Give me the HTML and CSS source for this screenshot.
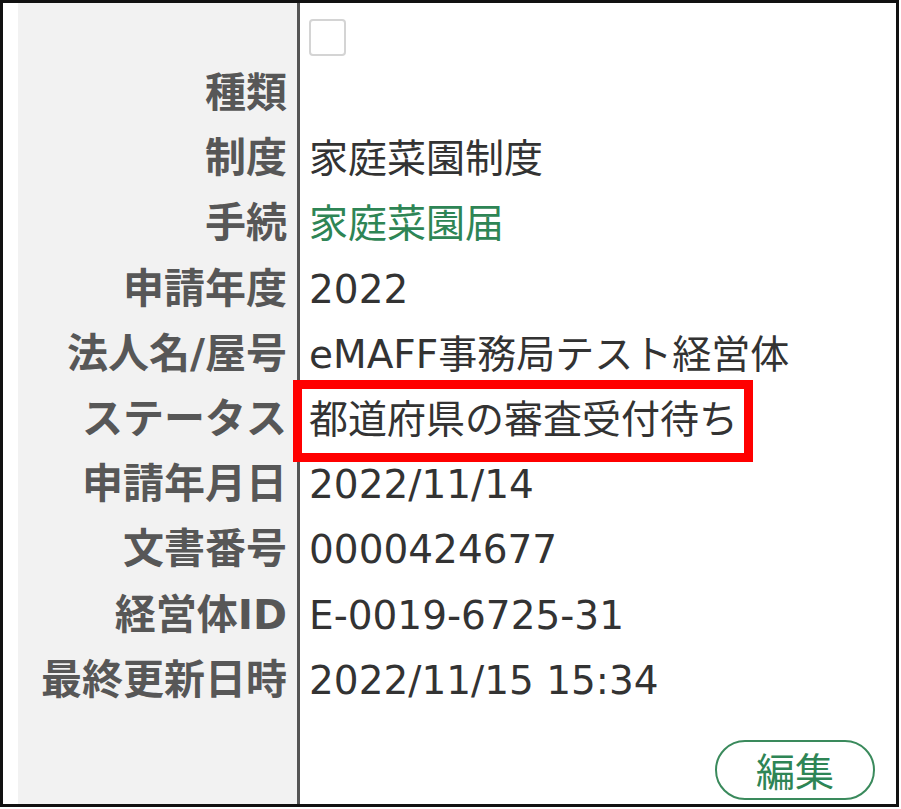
FILE: index.html
```html
<!DOCTYPE html>
<html lang="ja">
<head>
<meta charset="utf-8">
<link rel="stylesheet" href="styles.css">
</head>
<body>
<div class="card">
  <div class="grid">
    <div class="lab top"></div>
    <div class="val top"><span class="checkbox"></span></div>

    <div class="lab">種類</div><div class="val"></div>
    <div class="lab">制度</div><div class="val">家庭菜園制度</div>
    <div class="lab">手続</div><div class="val green">家庭菜園届</div>
    <div class="lab">申請年度</div><div class="val">2022</div>
    <div class="lab">法人名/屋号</div><div class="val">eMAFF事務局テスト経営体</div>
    <div class="lab">ステータス</div><div class="val status">都道府県の審査受付待ち<span class="highlight"></span></div>
    <div class="lab">申請年月日</div><div class="val">2022/11/14</div>
    <div class="lab">文書番号</div><div class="val">0000424677</div>
    <div class="lab">経営体ID</div><div class="val">E-0019-6725-31</div>
    <div class="lab">最終更新日時</div><div class="val">2022/11/15 15:34</div>

    <div class="lab foot"></div>
    <div class="val foot"><button class="edit" type="button">編集</button></div>
  </div>
</div>
</body>
</html>
```

FILE: styles.css
```css
html, body {
  margin: 0;
  padding: 0;
  background: #fff;
}

.card {
  box-sizing: border-box;
  width: 899px;
  height: 807px;
  border: 3px solid #111;
  padding-left: 15px;
  background: #fff;
}

.grid {
  display: grid;
  grid-template-columns: 282px 1fr;
  grid-template-rows: 58px repeat(10, 65.2px) 1fr;
  height: 100%;
}

.lab {
  box-sizing: border-box;
  background: #f2f2f2;
  border-right: 3px solid #555;
  padding-right: 10px;
  text-align: right;
  font-family: "DejaVu Sans", "Noto Sans CJK JP", sans-serif;
  font-weight: bold;
  font-size: 41px;
  line-height: 65.2px;
  color: #575757;
  white-space: nowrap;
}

.val {
  padding-left: 9px;
  font-family: "DejaVu Sans", "Noto Sans CJK JP", sans-serif;
  font-size: 39px;
  line-height: 65.2px;
  color: #333;
  white-space: nowrap;
}

.val.green {
  color: #2e8555;
}

.val.top {
  padding-top: 16px;
  line-height: normal;
}

.checkbox {
  display: block;
  box-sizing: border-box;
  width: 37px;
  height: 37px;
  border: 2px solid #d4d4d4;
  border-radius: 4px;
  background: #fff;
}

.status {
  position: relative;
}

.highlight {
  position: absolute;
  left: -7px;
  top: -7px;
  box-sizing: border-box;
  width: 460px;
  height: 82px;
  border: 9px solid #ff0000;
}

.val.foot {
  display: flex;
  justify-content: flex-end;
  align-items: flex-start;
  padding-top: 27px;
  padding-right: 21px;
  line-height: normal;
}

.edit {
  box-sizing: border-box;
  width: 160px;
  height: 60px;
  border: 2px solid #3a8a5c;
  border-radius: 30px;
  background: #fff;
  color: #2e8555;
  font-family: "Noto Sans CJK JP", sans-serif;
  font-size: 39px;
  line-height: 1;
  padding: 0;
  display: flex;
  align-items: center;
  justify-content: center;
}
```
